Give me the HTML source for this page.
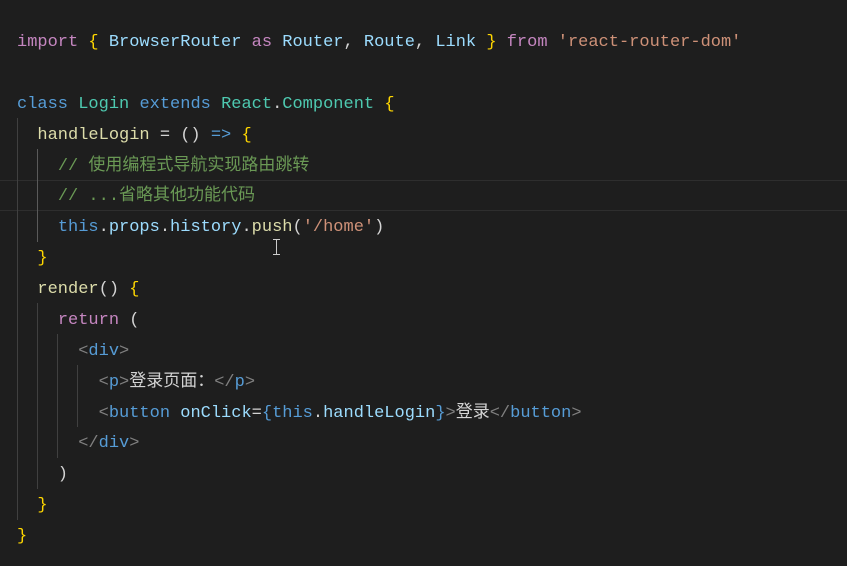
<!DOCTYPE html>
<html><head><meta charset="utf-8"><style>
html,body{margin:0;padding:0;background:#1e1e1e;width:847px;height:566px;overflow:hidden}
pre{position:absolute;left:17px;top:28px;margin:0;font-family:"Liberation Mono","Noto Sans CJK SC",monospace;font-size:17px;line-height:30.875px;color:#d4d4d4;white-space:pre}
.k{color:#c586c0}.v{color:#9cdcfe}.c{color:#4ec9b0}.s{color:#ce9178}.m{color:#6a9955}.b{color:#569cd6}.f{color:#dcdcaa}.y{color:#ffd700}.t{color:#808080}
.g{position:absolute;width:1px;background:#404040}
.hl{position:absolute;left:0;right:0;top:180px;height:29px;border-top:1px solid #2e2e2e;border-bottom:1px solid #2e2e2e}
</style></head><body>
<div class="hl"></div>
<div class="g" style="left:17px;top:118px;height:402px"></div>
<div class="g" style="left:37px;top:149px;height:93px;background:#5a5a5a"></div>
<div class="g" style="left:37px;top:303px;height:186px"></div>
<div class="g" style="left:57px;top:334px;height:124px"></div>
<div class="g" style="left:77px;top:365px;height:62px"></div>
<pre><span class="k">import</span> <span class="y">{</span> <span class="v">BrowserRouter</span> <span class="k">as</span> <span class="v">Router</span>, <span class="v">Route</span>, <span class="v">Link</span> <span class="y">}</span> <span class="k">from</span> <span class="s">'react-router-dom'</span>

<span class="b">class</span> <span class="c">Login</span> <span class="b">extends</span> <span class="c">React</span>.<span class="c">Component</span> <span class="y">{</span>
  <span class="f">handleLogin</span> = () <span class="b">=&gt;</span> <span class="y">{</span>
    <span class="m">// 使用编程式导航实现路由跳转</span>
    <span class="m">// ...省略其他功能代码</span>
    <span class="b">this</span>.<span class="v">props</span>.<span class="v">history</span>.<span class="f">push</span>(<span class="s">'/home'</span>)
  <span class="y">}</span>
  <span class="f">render</span>() <span class="y">{</span>
    <span class="k">return</span> (
      <span class="t">&lt;</span><span class="b">div</span><span class="t">&gt;</span>
        <span class="t">&lt;</span><span class="b">p</span><span class="t">&gt;</span>登录页面：<span class="t">&lt;/</span><span class="b">p</span><span class="t">&gt;</span>
        <span class="t">&lt;</span><span class="b">button</span> <span class="v">onClick</span>=<span class="b">{</span><span class="b">this</span>.<span class="v">handleLogin</span><span class="b">}</span><span class="t">&gt;</span>登录<span class="t">&lt;/</span><span class="b">button</span><span class="t">&gt;</span>
      <span class="t">&lt;/</span><span class="b">div</span><span class="t">&gt;</span>
    )
  <span class="y">}</span>
<span class="y">}</span></pre>
<div style="position:absolute;left:273px;top:239px;width:7px;height:16px;border-top:1px solid #ccc;border-bottom:1px solid #ccc;box-sizing:border-box"></div>
<div style="position:absolute;left:276px;top:239px;width:1px;height:16px;background:#ccc"></div>
</body></html>
